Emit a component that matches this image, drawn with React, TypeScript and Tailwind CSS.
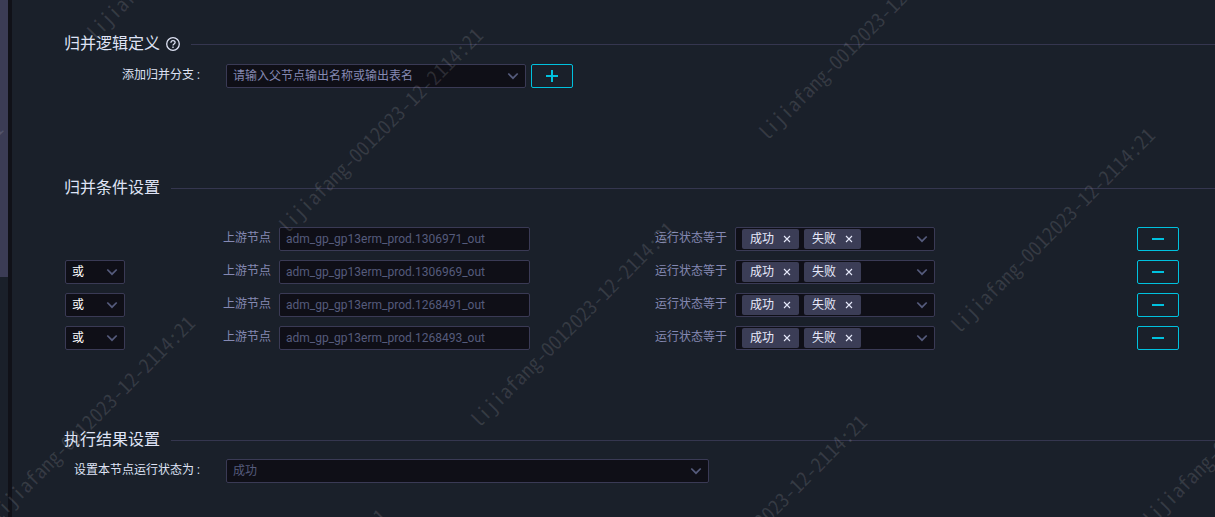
import { useState } from 'react'
import type { ReactNode, SelectHTMLAttributes } from 'react'

type Branch = { id: string; node: string; op: string | null; statuses: string[] }

const INITIAL: Branch[] = [
  { id: 'b1', node: 'adm_gp_gp13erm_prod.1306971_out', op: null, statuses: ['成功', '失败'] },
  { id: 'b2', node: 'adm_gp_gp13erm_prod.1306969_out', op: '或', statuses: ['成功', '失败'] },
  { id: 'b3', node: 'adm_gp_gp13erm_prod.1268491_out', op: '或', statuses: ['成功', '失败'] },
  { id: 'b4', node: 'adm_gp_gp13erm_prod.1268493_out', op: '或', statuses: ['成功', '失败'] },
]

const WATERMARK = 'lijiafang-0012023-12-2114:21'

// left end of every watermark string
const MARKS = [
  [89, 36], [281, 229], [473, 423], [665, 616],
  [761, 136], [953, 329], [1145, 522],
  [-199, 323], [-7, 517], [185, 710],
]

function Chevron() {
  return (
    <svg viewBox="0 0 12 12" className="w-3 h-3 text-[#555b7c]" fill="none" stroke="currentColor" strokeWidth="1.7" aria-hidden="true">
      <path d="M1.300 3.500 6 8.200l4.700-4.700" />
    </svg>
  )
}

function Sign({ plus = false }: { plus?: boolean }) {
  return (
    <svg viewBox="0 0 12 12" className="w-3 h-3" stroke="currentColor" strokeWidth="2" shapeRendering="crispEdges" aria-hidden="true">
      <path d={plus ? 'M0 6h12M6 0v12' : 'M0 6h12'} />
    </svg>
  )
}

type DropdownProps = SelectHTMLAttributes<HTMLSelectElement> & { box: string; tone: string }

function Dropdown({ box, tone, children, ...rest }: DropdownProps) {
  return (
    <div className={`relative h-6 ${box}`}>
      <select
        {...rest}
        className={`block w-full h-6 pl-1.5 pr-6 appearance-none rounded-xs border border-[#3a3a55] bg-[#0f0f17] text-xs opacity-100 outline-none ${tone}`}
      >
        {children}
      </select>
      <span className="absolute inset-y-0 right-[7px] flex items-center pointer-events-none"><Chevron /></span>
    </div>
  )
}

function Heading({ children, help }: { children: ReactNode; help?: boolean }) {
  return (
    <div className="flex items-center h-6">
      <h2 className="text-base leading-6 text-[#dfe3f5]">{children}</h2>
      {help && (
        <button aria-label="帮助" className="ml-1.5 text-[#dfe3f5]">
          <svg viewBox="0 0 14 14" className="block w-3.5 h-3.5" fill="none" stroke="currentColor" strokeWidth="1.3">
            <circle cx="7" cy="7" r="6.300" />
            <path d="M4.900 5.700c0-1.300.9-2.100 2.100-2.100s2.100.8 2.100 1.900c0 1.400-2.100 1.500-2.100 2.900" />
            <path d="M7 9.500v1.400" />
          </svg>
        </button>
      )}
      <div className="flex-1 h-px ml-[11px] bg-[#35364f]" />
    </div>
  )
}

function SquareButton({ label, plus, onClick }: { label: string; plus?: boolean; onClick: () => void }) {
  return (
    <button
      aria-label={label}
      onClick={onClick}
      className="flex flex-none items-center justify-center w-[42px] h-6 rounded-xs border border-[#00c1de] text-[#00c1de]"
    >
      <Sign plus={plus} />
    </button>
  )
}

export default function App() {
  const [branches, setBranches] = useState(INITIAL)
  const [parent, setParent] = useState('')

  const removeBranch = (id: string) => setBranches(prev => prev.filter(b => b.id !== id))

  const removeStatus = (id: string, status: string) =>
    setBranches(prev =>
      prev.map(b => (b.id === id ? { ...b, statuses: b.statuses.filter(s => s !== status) } : b))
    )

  const addBranch = () => {
    if (!parent) return
    setBranches(prev => [...prev, { id: `b${Date.now()}`, node: parent, op: '或', statuses: ['成功'] }])
    setParent('')
  }

  return (
    <div className="relative flex min-h-screen overflow-hidden bg-[#1a202a] text-xs font-[Roboto,'Noto_Sans_CJK_SC',sans-serif]">
      <div className="flex-none w-3 border-r-4 border-[#101118]">
        <div className="h-[277px] bg-[#3b3c55]" />
      </div>

      <main className="flex-1 min-w-0 pt-8 pl-[52px]">
        <section>
          <Heading help>归并逻辑定义</Heading>
          <div className="flex items-center mt-2">
            <label htmlFor="parent" className="w-[136px] h-6 leading-[22px] text-right text-[#dfe3f5]">添加归并分支 :</label>
            <Dropdown
              id="parent"
              box="w-[300px] ml-[26px]"
              tone="text-[#8589b3]"
              value={parent}
              onChange={e => setParent(e.target.value)}
            >
              <option value="">请输入父节点输出名称或输出表名</option>
              {INITIAL.map(b => <option key={b.id} value={b.node}>{b.node}</option>)}
            </Dropdown>
            <div className="ml-[5px]">
              <SquareButton label="添加" plus onClick={addBranch} />
            </div>
          </div>
        </section>

        <section className="mt-[88px]">
          <Heading>归并条件设置</Heading>
          <div className="flex flex-col gap-[9px] mt-[27px] pl-px pr-9">
            {branches.map(b => (
              <div key={b.id} className="flex items-center">
                <div className="flex-none w-[60px]">
                  {b.op && (
                    <Dropdown box="w-full" tone="text-white" aria-label="逻辑关系" defaultValue={b.op}>
                      <option>或</option>
                      <option>且</option>
                    </Dropdown>
                  )}
                </div>
                <label htmlFor={`${b.id}-node`} className="flex-none w-[154px] h-6 pr-2 leading-[22px] text-right text-[#8589b3]">上游节点</label>
                <input
                  id={`${b.id}-node`}
                  value={b.node}
                  disabled
                  className="flex-none w-[251px] h-6 px-1.5 rounded-xs border border-[#3a3a55] bg-[#0f0f17] text-[#555b7c]"
                />
                <span id={`${b.id}-status`} className="flex-none w-[205px] h-6 pr-2 leading-[22px] text-right text-[#8589b3]">运行状态等于</span>
                <div
                  role="group"
                  aria-labelledby={`${b.id}-status`}
                  className="flex flex-none items-center gap-[5px] w-[200px] h-6 px-1.5 rounded-xs border border-[#3a3a55] bg-[#0f0f17]"
                >
                  {b.statuses.map(s => (
                    <span key={s} className="flex items-center gap-[9px] h-5 px-2 rounded-xs bg-[#3b3d56] text-[#e6e9fa]">
                      {s}
                      <button aria-label={`移除${s}`} onClick={() => removeStatus(b.id, s)}>
                        <svg viewBox="0 0 8 8" className="block w-2 h-2" stroke="currentColor" strokeWidth="1.1">
                          <path d="M1 1l6 6M7 1 1 7" />
                        </svg>
                      </button>
                    </span>
                  ))}
                  <button aria-label="展开" className="ml-auto"><Chevron /></button>
                </div>
                <div className="ml-auto">
                  <SquareButton label="删除" onClick={() => removeBranch(b.id)} />
                </div>
              </div>
            ))}
          </div>
        </section>

        <section className="mt-[78px]">
          <Heading>执行结果设置</Heading>
          <div className="flex items-center mt-[7px]">
            <label htmlFor="result" className="w-[136px] h-6 leading-[22px] text-right text-[#dfe3f5]">设置本节点运行状态为 :</label>
            <Dropdown id="result" box="w-[483px] ml-[26px]" tone="text-[#555b7c]" disabled defaultValue="成功">
              <option>成功</option>
              <option>失败</option>
            </Dropdown>
          </div>
        </section>
      </main>

      <div className="absolute inset-0 overflow-hidden pointer-events-none select-none" aria-hidden="true">
        {MARKS.map(([x, y]) => (
          <span
            key={`${x},${y}`}
            className="absolute h-5 -mt-2.5 -rotate-45 origin-left whitespace-nowrap font-['Noto_Sans_Mono_CJK_SC','Liberation_Mono',monospace] text-xl leading-5 text-white/12"
            style={{ left: x, top: y }}
          >
            {WATERMARK}
          </span>
        ))}
      </div>
    </div>
  )
}
